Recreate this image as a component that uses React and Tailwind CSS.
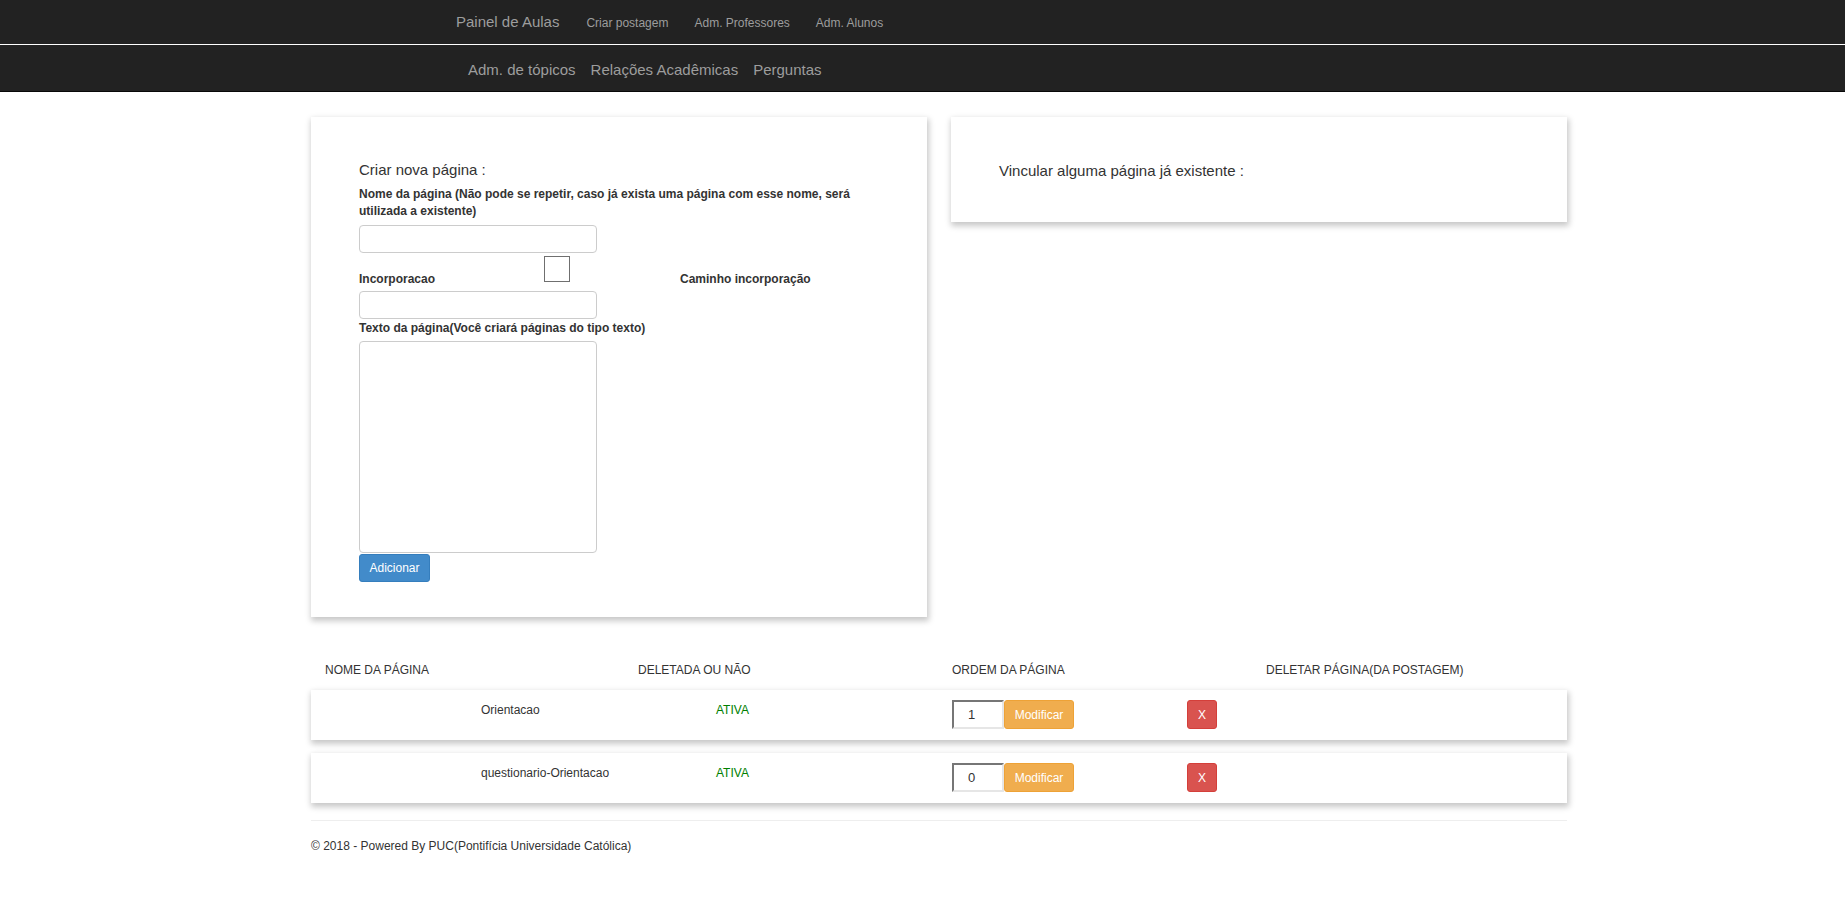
import React from "react";

function Row({ name, order }) {
  return (
    <div className="flex h-[50px] items-start bg-white pl-[170px] shadow-[1px_3px_6px_1px_rgba(0,0,0,0.22)]">
      <div className="w-[235px] pt-[12px] text-[12px] leading-[17px] text-[#333]">{name}</div>
      <div className="w-[236px] pt-[12px] text-[12px] leading-[17px] text-[#008000]">ATIVA</div>
      <div className="flex w-[235px] items-start pt-[10px]">
        <input
          readOnly
          value={order}
          className="h-[29px] w-[52px] border-2 border-t-[#767676] border-l-[#767676] border-r-[#e6e6e6] border-b-[#e6e6e6] bg-white pl-[14px] text-[13px] text-[#333] outline-none"
        />
        <button className="h-[29px] w-[70px] rounded-[3px] border border-[#eea236] bg-[#f0ad4e] text-[12px] text-white">
          Modificar
        </button>
      </div>
      <div className="pt-[10px]">
        <button className="h-[29px] w-[30px] rounded-[3px] border border-[#d43f3a] bg-[#d9534f] text-[12px] text-white">
          X
        </button>
      </div>
    </div>
  );
}

export default function App() {
  return (
    <div className="min-h-screen bg-white font-['Liberation_Sans',Arial,sans-serif] text-[#333]">
      {/* top navbar */}
      <div className="flex h-[44px] items-center bg-[#222] pl-[456px] pt-[1px]">
        <span className="mr-[27px] text-[15px] text-[#9d9d9d]">Painel de Aulas</span>
        <div className="flex gap-[26px] text-[12px] text-[#9d9d9d]">
          <span>Criar postagem</span>
          <span>Adm. Professores</span>
          <span>Adm. Alunos</span>
        </div>
      </div>
      <div className="h-[1px] bg-white" />
      <div className="flex h-[47px] items-center gap-[15px] border-b border-[#080808] bg-[#222] pl-[468px] pt-[4px] text-[15px] text-[#9d9d9d]">
        <span>Adm. de tópicos</span>
        <span>Relações Acadêmicas</span>
        <span>Perguntas</span>
      </div>

      <div className="ml-[311px] w-[1256px]">
        <div className="mt-[25px] grid grid-cols-2 items-start gap-[24px]">
          {/* card 1 */}
          <div className="bg-white px-[48px] pb-[35px] pt-[43px] shadow-[1px_3px_6px_1px_rgba(0,0,0,0.22)]">
            <div className="text-[15px] leading-[20px]">Criar nova página :</div>
            <div className="mt-[6px] text-[12px] font-bold leading-[17px]">
              Nome da página (Não pode se repetir, caso já exista uma página com esse nome, será utilizada a existente)
            </div>
            <input className="mt-[5px] block h-[28px] w-[238px] rounded-[4px] border border-[#ccc] bg-white outline-none" />
            <div className="mt-[3px] flex h-[35px] items-start">
              <div className="mt-[15px] w-[185px] text-[12px] font-bold leading-[17px]">Incorporacao</div>
              <input type="checkbox" className="h-[26px] w-[26px] appearance-none border border-[#6f6f6f] bg-white" />
              <div className="ml-[110px] mt-[15px] text-[12px] font-bold leading-[17px]">Caminho incorporação</div>
            </div>
            <input className="block h-[28px] w-[238px] rounded-[4px] border border-[#ccc] bg-white outline-none" />
            <div className="mt-[1px] text-[12px] font-bold leading-[17px]">
              Texto da página(Você criará páginas do tipo texto)
            </div>
            <textarea className="mt-[4px] block h-[212px] w-[238px] resize-none rounded-[4px] border border-[#ccc] bg-white outline-none" />
            <button className="mt-[1px] h-[28px] w-[71px] rounded-[3px] border border-[#357ebd] bg-[#428bca] text-[12px] text-white">
              Adicionar
            </button>
          </div>
          {/* card 2 */}
          <div className="h-[105px] bg-white px-[48px] pt-[44px] shadow-[1px_3px_6px_1px_rgba(0,0,0,0.22)]">
            <div className="text-[15px] leading-[20px]">Vincular alguma página já existente :</div>
          </div>
        </div>

        {/* table header */}
        <div className="mt-[45px] grid grid-cols-4 text-[12px] leading-[17px]">
          <div className="pl-[14px]">NOME DA PÁGINA</div>
          <div className="pl-[13px]">DELETADA OU NÃO</div>
          <div className="pl-[13px]">ORDEM DA PÁGINA</div>
          <div className="pl-[13px]">DELETAR PÁGINA(DA POSTAGEM)</div>
        </div>

        <div className="mt-[11px] flex flex-col gap-[13px]">
          <Row name="Orientacao" order="1" />
          <Row name="questionario-Orientacao" order="0" />
        </div>

        <div className="mt-[17px] border-t border-[#eee]" />
        <div className="mt-[17px] text-[12px] leading-[17px]">
          © 2018 - Powered By PUC(Pontifícia Universidade Católica)
        </div>
      </div>
    </div>
  );
}
